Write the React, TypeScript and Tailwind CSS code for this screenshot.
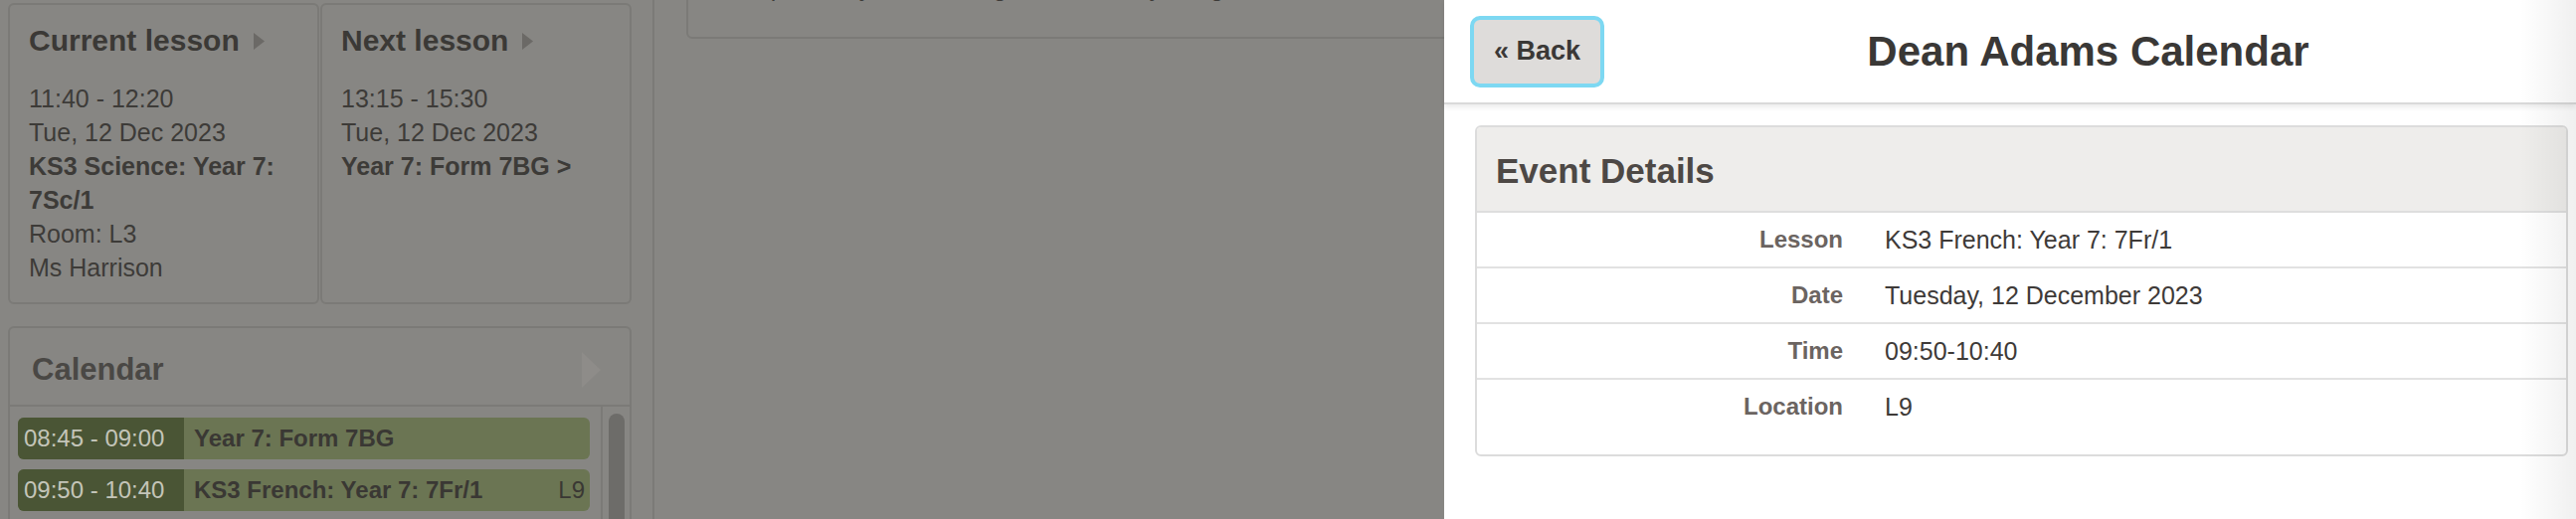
const LESSONS = [
  {
    title: "Current lesson",
    lines: [
      { text: "11:40 - 12:20" },
      { text: "Tue, 12 Dec 2023" },
      { text: "KS3 Science: Year 7: 7Sc/1", bold: true },
      { text: "Room: L3" },
      { text: "Ms Harrison" },
    ],
  },
  {
    title: "Next lesson",
    lines: [
      { text: "13:15 - 15:30" },
      { text: "Tue, 12 Dec 2023" },
      { text: "Year 7: Form 7BG >", bold: true },
    ],
  },
];

const EVENTS = [
  { time: "08:45 - 09:00", title: "Year 7: Form 7BG", room: "" },
  { time: "09:50 - 10:40", title: "KS3 French: Year 7: 7Fr/1", room: "L9" },
];

const DETAILS = [
  { label: "Lesson", value: "KS3 French: Year 7: 7Fr/1" },
  { label: "Date", value: "Tuesday, 12 December 2023" },
  { label: "Time", value: "09:50-10:40" },
  { label: "Location", value: "L9" },
];

function Caret({ w, h, color }: { w: number; h: number; color: string }) {
  return (
    <svg width={w} height={h} viewBox={`0 0 ${w} ${h}`} className="shrink-0">
      <polygon points={`0,0 ${w},${h / 2} 0,${h}`} fill={color} strokeLinejoin="round" />
    </svg>
  );
}

function LessonCard({ title, lines }: (typeof LESSONS)[number]) {
  return (
    <div className="w-[313px] shrink-0 rounded-[6px] border-2 border-[#7b7a77] px-[19px] pt-[18px] pb-[18px]">
      <h3 className="flex items-center gap-[14px] text-[30px] leading-[36px] font-bold text-[#3b3936]">
        {title}
        <Caret w={11} h={17} color="#6b6966" />
      </h3>
      <div className="mt-[23px] text-[25px] leading-[34px] text-[#3d3b38]">
        {lines.map((l) => (
          <p key={l.text} className={l.bold ? "font-bold" : ""}>
            {l.text}
          </p>
        ))}
      </div>
    </div>
  );
}

function CalendarPanel() {
  return (
    <section className="mt-[22px] w-[627px] rounded-t-[6px] border-2 border-b-0 border-[#7b7a77]">
      <div className="flex items-center justify-between border-b-2 border-[#7b7a77] pt-[24px] pr-[29px] pb-[17px] pl-[22px]">
        <h3 className="text-[31px] leading-[36px] font-bold text-[#4a4845]">Calendar</h3>
        <Caret w={19} h={36} color="#8e8c89" />
      </div>
      <div className="flex h-[140px]">
        <ul className="flex flex-1 flex-col gap-[10px] pt-[11px] pr-[11px] pl-[8px]">
          {EVENTS.map((e) => (
            <li
              key={e.time}
              className="flex h-[42px] items-center overflow-hidden rounded-[6px] bg-[#6b7553] text-[24px] leading-[42px] text-[#3a3834]"
            >
              <span className="w-[167px] shrink-0 bg-[#4a5535] pl-[6px] text-[#c4c5b9]">{e.time}</span>
              <span className="pl-[10px] font-bold">{e.title}</span>
              <span className="ml-auto pr-[5px]">{e.room}</span>
            </li>
          ))}
        </ul>
        <div className="w-[29px] shrink-0 border-l-2 border-[#7b7a77] pt-[7px] pl-[6px]">
          <div className="h-[200px] w-[16px] rounded-full bg-[#6d6c69]" />
        </div>
      </div>
    </section>
  );
}

function EventDrawer() {
  return (
    <div className="absolute top-0 right-0 h-full w-[1138px] bg-white">
      <header className="flex h-[105px] items-center border-b-2 border-[#d9d9d9] bg-white pl-[26px] shadow-[0_3px_5px_rgba(0,0,0,0.08)]">
        <button className="h-[72px] w-[135px] shrink-0 rounded-[10px] border-4 border-[#7dd8f2] bg-[#dedcda] text-[27px] font-bold text-[#3a3836]">
          « Back
        </button>
        <h1 className="flex-1 pr-[4px] text-center text-[42px] leading-[50px] font-bold text-[#3a3836]">
          Dean Adams Calendar
        </h1>
      </header>

      <div className="pt-[21px] pr-[8px] pl-[31px]">
        <div className="overflow-hidden rounded-[6px] border-2 border-[#dcdcdc] pb-[21px]">
          <h2 className="border-b-2 border-[#dedede] bg-[#eeedeb] pt-[24px] pb-[20px] pl-[19px] text-[35px] leading-[40px] font-bold text-[#4d4845]">
            Event Details
          </h2>
          <dl className="grid grid-cols-[368px_1fr] gap-x-[42px]">
            {DETAILS.map((d, i) => (
              <div
                key={d.label}
                className={`col-span-2 grid grid-cols-subgrid py-3 ${i > 0 ? "border-t-2 border-[#e2e2e2]" : ""}`}
              >
                <dt className="text-right text-[24px] leading-[30px] font-bold text-[#6b6461]">{d.label}</dt>
                <dd className="text-[25px] leading-[30px] text-[#3e3a38]">{d.value}</dd>
              </div>
            ))}
          </dl>
        </div>
      </div>

      <div className="pointer-events-none absolute top-0 right-0 h-full w-[57px] bg-linear-to-r from-black/0 to-black/[0.06]" />
    </div>
  );
}

export default function App() {
  return (
    <div className="relative flex h-[522px] w-[2590px] overflow-hidden bg-[#878683] font-['Liberation_Sans',Arial,sans-serif]">
      <aside className="w-[658px] shrink-0 border-r-2 border-[#7b7a77] pt-[3px] pl-[8px]">
        <div className="flex gap-[1px]">
          {LESSONS.map((l) => (
            <LessonCard key={l.title} {...l} />
          ))}
        </div>
        <CalendarPanel />
      </aside>

      <main className="flex-1 pl-[32px]">
        <div className="mt-[-60px] h-[99px] rounded-[6px] border-2 border-[#7b7a77] pt-[28px] pl-[30px] text-[25px] leading-[34px] text-[#3d3b38]">
          Complete any outstanding homework by the given due dates
        </div>
      </main>

      <EventDrawer />
    </div>
  );
}
